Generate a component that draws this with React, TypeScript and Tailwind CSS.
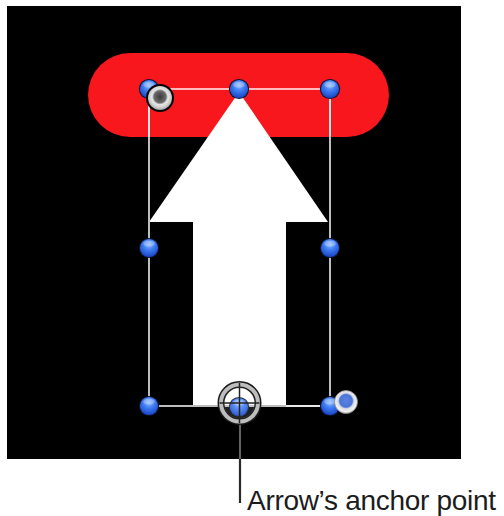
import React from "react";

const handles: [number, number][] = [
  [142, 83],
  [232, 83],
  [323, 83],
  [142, 242],
  [323, 242],
  [142, 400],
  [323, 400],
  [232, 401],
];

function Blue({ cx, cy, r = 9.5 }: { cx: number; cy: number; r?: number }) {
  return (
    <g>
      <circle cx={cx} cy={cy} r={r + 0.6} fill="#0b1330" />
      <circle cx={cx} cy={cy} r={r - 0.4} fill="url(#blueG)" />
      <ellipse cx={cx} cy={cy - r * 0.45} rx={r * 0.6} ry={r * 0.32} fill="#ffffff" opacity={0.28} />
    </g>
  );
}

export default function App() {
  return (
    <div className="w-[504px] h-[516px] bg-white overflow-hidden">
      <div className="relative ml-[7px] mt-[6px] w-[454px] h-[453px] bg-black">
        <svg
          width={454}
          height={453}
          viewBox="0 0 454 453"
          className="absolute left-0 top-0 overflow-visible"
        >
          <defs>
            <radialGradient id="blueG" cx="50%" cy="30%" r="70%">
              <stop offset="0%" stopColor="#8db8ff" />
              <stop offset="45%" stopColor="#3f7cf2" />
              <stop offset="100%" stopColor="#1743c4" />
            </radialGradient>
            <radialGradient id="grayG" cx="50%" cy="45%" r="55%">
              <stop offset="0%" stopColor="#3a3a3a" />
              <stop offset="45%" stopColor="#6a6a6a" />
              <stop offset="60%" stopColor="#e8e8e8" />
              <stop offset="85%" stopColor="#c8c8c8" />
              <stop offset="100%" stopColor="#9a9a9a" />
            </radialGradient>
            <radialGradient id="lightG" cx="50%" cy="45%" r="55%">
              <stop offset="0%" stopColor="#5b84e0" />
              <stop offset="50%" stopColor="#4a74d8" />
              <stop offset="62%" stopColor="#d8dbe2" />
              <stop offset="85%" stopColor="#f2f2f2" />
              <stop offset="100%" stopColor="#b8b8b8" />
            </radialGradient>
          </defs>

          {/* red pill */}
          <rect x={81} y={47} width={301} height={84} rx={42} fill="#f7171d" />

          {/* arrow */}
          <polygon
            points="232,86 321,216 279,216 279,400 186,400 186,216 142,216"
            fill="#ffffff"
          />

          {/* bounding box */}
          <line x1={142} y1={83} x2={323} y2={83} stroke="#ffffff" strokeOpacity={0.7} strokeWidth={2} />
          <line x1={142} y1={83} x2={142} y2={400} stroke="#bdbdbd" strokeWidth={2} />
          <line x1={323} y1={83} x2={323} y2={400} stroke="#bdbdbd" strokeWidth={2} />
          <line x1={142} y1={131} x2={142} y2={83} stroke="#ffffff" strokeOpacity={0.6} strokeWidth={2} />
          <line x1={323} y1={131} x2={323} y2={83} stroke="#ffffff" strokeOpacity={0.6} strokeWidth={2} />
          <line x1={142} y1={400} x2={323} y2={400} stroke="#bdbdbd" strokeWidth={2} />
          <line x1={279} y1={400} x2={339} y2={400} stroke="#e8e8e8" strokeWidth={2} />

          {handles.map(([x, y], i) => (
            <Blue key={i} cx={x} cy={y} />
          ))}

          {/* rotation handle */}
          <circle cx={153} cy={92} r={14} fill="#050505" />
          <circle cx={153} cy={92} r={12} fill="url(#grayG)" />

          {/* bottom-right gray handle */}
          <circle cx={339} cy={396} r={11.5} fill="url(#lightG)" />
          <circle cx={339} cy={396} r={11.5} fill="none" stroke="#8a8a8a" strokeWidth={0.8} />

          {/* leader line */}
          <line x1={233} y1={416} x2={233} y2={497} stroke="#2a2a2a" strokeWidth={2.2} />
          <line x1={233} y1={416} x2={233} y2={453} stroke="#9a9a9a" strokeWidth={1} />

          {/* anchor point ring */}
          <circle cx={232.5} cy={397} r={18.5} fill="none" stroke="#1c1c1c" strokeWidth={7} />
          <circle cx={232.5} cy={397} r={18.5} fill="none" stroke="#bdbdbd" strokeWidth={4} />
          <circle cx={232.5} cy={397} r={15.5} fill="#ffffff" fillOpacity={0.12} />
          <line x1={232.5} y1={377} x2={232.5} y2={417} stroke="#222" strokeWidth={1.5} />
          <line x1={212.5} y1={397} x2={252.5} y2={397} stroke="#222" strokeWidth={1.5} />
        </svg>
      </div>
      <div
        className="mt-[28px] ml-[247px] text-[28px] leading-none text-[#1c1c1c] whitespace-nowrap tracking-[-0.3px]"
        style={{ fontFamily: '"Liberation Sans", Arial, sans-serif' }}
      >
        Arrow’s anchor point
      </div>
    </div>
  );
}
